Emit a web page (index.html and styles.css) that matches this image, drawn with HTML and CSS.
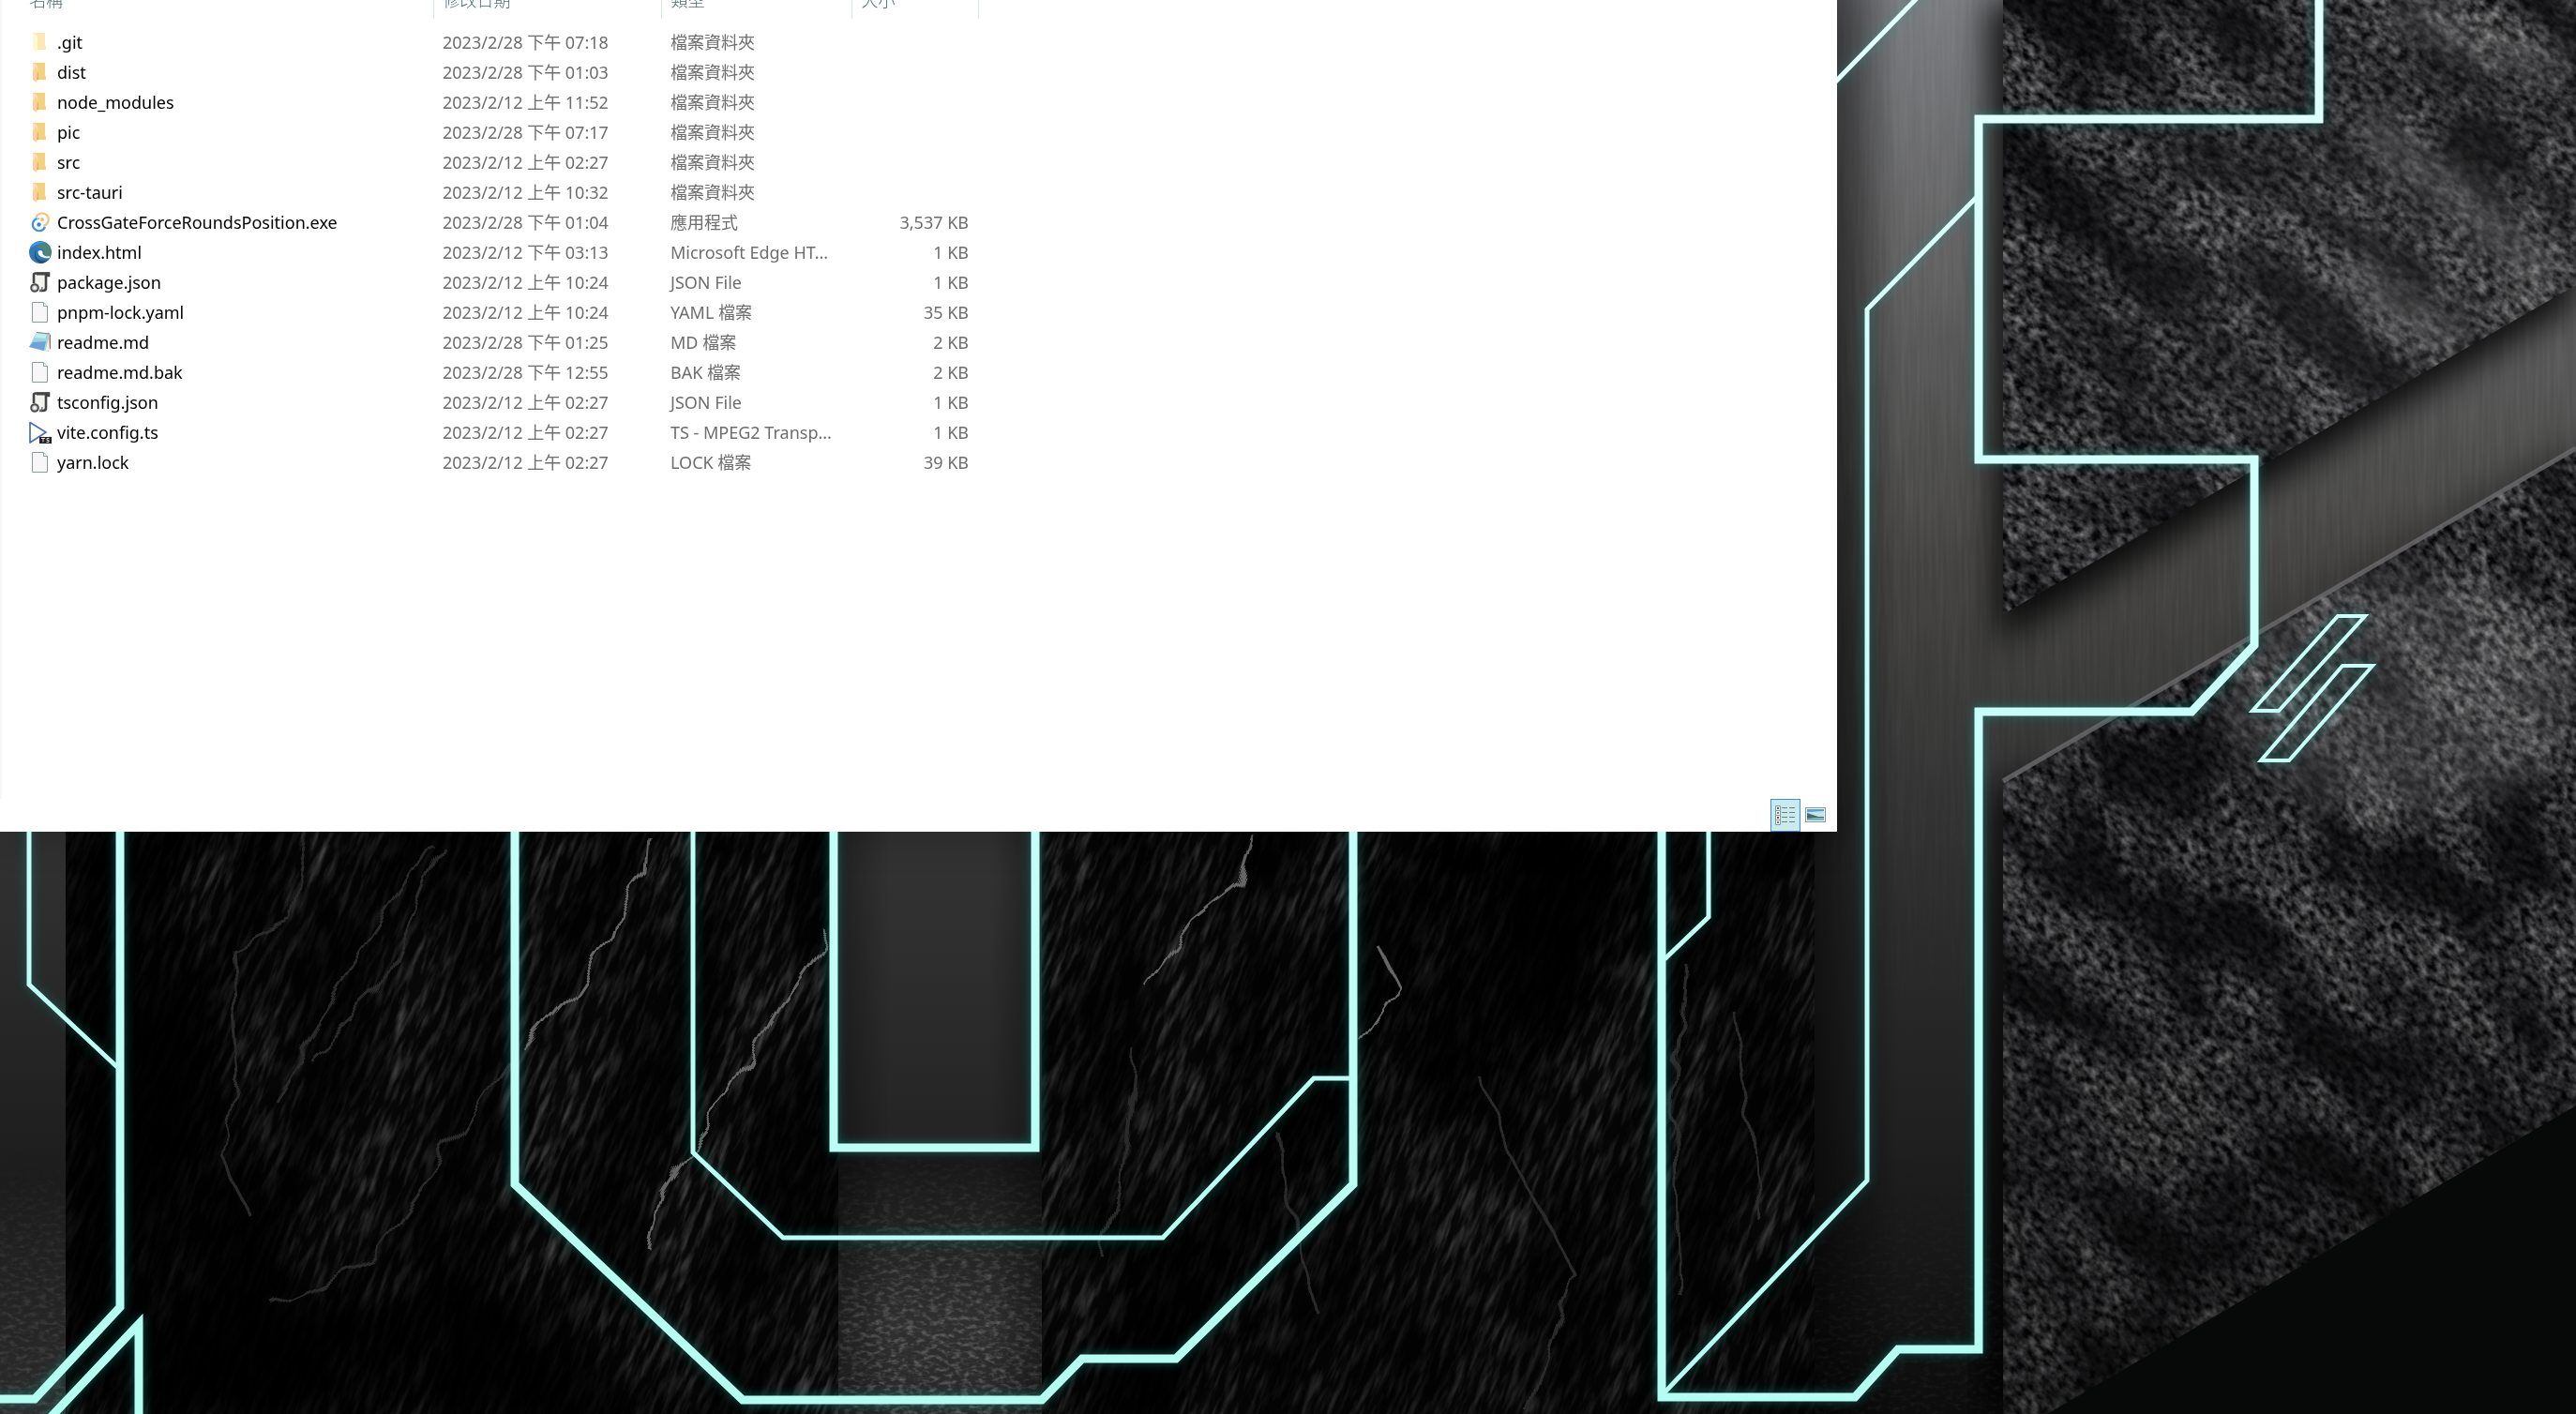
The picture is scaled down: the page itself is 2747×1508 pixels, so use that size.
FILE: index.html
```html
<!DOCTYPE html>
<html lang="zh-Hant">
<head>
<meta charset="utf-8">
<title>檔案總管</title>
<link rel="stylesheet" href="styles.css">
</head>
<body>
<svg class="wallpaper" viewBox="0 0 2747 1508" preserveAspectRatio="xMinYMin slice" aria-hidden="true">
  <defs>
    <linearGradient id="metal" x1="0" y1="0" x2="0" y2="1508" gradientUnits="userSpaceOnUse">
      <stop offset="0" stop-color="#7a7b7f"/><stop offset=".2" stop-color="#5e5e5e"/><stop offset=".4" stop-color="#434241"/><stop offset=".6" stop-color="#303030"/><stop offset=".8" stop-color="#202021"/><stop offset="1" stop-color="#0c0c0c"/>
    </linearGradient>
    <linearGradient id="pillarShade">
      <stop offset="0" stop-color="#000" stop-opacity=".65"/><stop offset=".25" stop-color="#000" stop-opacity=".1"/><stop offset=".75" stop-color="#000" stop-opacity=".1"/><stop offset="1" stop-color="#000" stop-opacity=".7"/>
    </linearGradient>
    <linearGradient id="leftShade">
      <stop offset="0" stop-color="#000" stop-opacity=".6"/><stop offset="1" stop-color="#000" stop-opacity="0"/>
    </linearGradient>
    <linearGradient id="midMetal" x1="0" y1="886" x2="0" y2="1508" gradientUnits="userSpaceOnUse">
      <stop offset="0" stop-color="#383838"/><stop offset=".53" stop-color="#272727"/><stop offset=".56" stop-color="#191919"/><stop offset=".85" stop-color="#333"/><stop offset="1" stop-color="#2a2a2a"/>
    </linearGradient>
    <linearGradient id="leftMetal" x1="0" y1="886" x2="0" y2="1508" gradientUnits="userSpaceOnUse">
      <stop offset="0" stop-color="#333"/><stop offset=".6" stop-color="#1c1c1c"/><stop offset="1" stop-color="#2b2b2b"/>
    </linearGradient>
    <linearGradient id="neon" x1="0" y1="0" x2="0" y2="1508" gradientUnits="userSpaceOnUse">
      <stop offset="0" stop-color="#e2fffc"/><stop offset=".5" stop-color="#c8fff8"/><stop offset="1" stop-color="#b4fdf1"/>
    </linearGradient>
    <linearGradient id="stoneShade" x1="0" y1="800" x2="0" y2="1508" gradientUnits="userSpaceOnUse">
      <stop offset="0" stop-color="#000" stop-opacity="0"/><stop offset="1" stop-color="#000" stop-opacity=".35"/>
    </linearGradient>
    <radialGradient id="stoneLight" cx="2570" cy="300" r="420" gradientUnits="userSpaceOnUse">
      <stop offset="0" stop-color="#fff" stop-opacity=".08"/><stop offset="1" stop-color="#fff" stop-opacity="0"/>
    </radialGradient>
    <filter id="granite" x="0" y="0" width="100%" height="100%" color-interpolation-filters="sRGB">
      <feTurbulence type="fractalNoise" baseFrequency=".09 .14" numOctaves="4" seed="8"/>
      <feColorMatrix values="1.1 0 0 0 -.28  1.1 0 0 0 -.28  1.1 0 0 0 -.28  0 0 0 0 1" result="grain"/>
      <feTurbulence type="fractalNoise" baseFrequency=".007 .014" numOctaves="5" seed="4"/>
      <feColorMatrix values="2.8 0 0 0 -.85  2.8 0 0 0 -.85  2.8 0 0 0 -.84  0 0 0 0 1" result="patches"/>
      <feComposite in="grain" in2="patches" operator="arithmetic" k1=".68" k2=".2" k3="0" k4="0"/>
      <feColorMatrix values=".72 0 0 0 .02  0 .72 0 0 .02  0 0 .72 0 .026  0 0 0 0 1"/>
    </filter>
    <filter id="slate" x="0" y="0" width="100%" height="100%" color-interpolation-filters="sRGB">
      <feTurbulence type="fractalNoise" baseFrequency=".15 .024" numOctaves="4" seed="21"/>
      <feColorMatrix values="1.7 0 0 0 -.74  1.7 0 0 0 -.74  1.7 0 0 0 -.74  0 0 0 0 1" result="grain"/>
      <feTurbulence type="fractalNoise" baseFrequency=".012 .005" numOctaves="3" seed="12"/>
      <feColorMatrix values="2.4 0 0 0 -.85  2.4 0 0 0 -.85  2.4 0 0 0 -.85  0 0 0 0 1" result="patches"/>
      <feComposite in="grain" in2="patches" operator="arithmetic" k1=".34" k2=".1" k3=".03" k4="0"/>
      <feColorMatrix values=".36 0 0 0 .006  0 .36 0 0 .006  0 0 .36 0 .006  0 0 0 0 1"/>
    </filter>
    <filter id="brushed" x="0" y="0" width="100%" height="100%" color-interpolation-filters="sRGB">
      <feTurbulence type="fractalNoise" baseFrequency=".25 .012" numOctaves="2" seed="3"/>
      <feColorMatrix values="0 0 0 0 1  0 0 0 0 1  0 0 0 0 1  .1 0 0 0 -.03"/>
    </filter>
    <filter id="rough" x="0" y="0" width="100%" height="100%" color-interpolation-filters="sRGB">
      <feTurbulence type="fractalNoise" baseFrequency=".12 .22" numOctaves="3" seed="5"/>
      <feColorMatrix values="0 0 0 0 .8  0 0 0 0 .8  0 0 0 0 .8  1.1 0 0 0 -.48"/>
    </filter>
    <filter id="glow" x="0" y="0" width="2747" height="1508" filterUnits="userSpaceOnUse"><feGaussianBlur stdDeviation="6"/></filter>
    <filter id="shadow" x="-20%" y="-20%" width="140%" height="140%"><feGaussianBlur stdDeviation="18"/></filter>
    <filter id="crackle" x="0" y="860" width="2000" height="648" filterUnits="userSpaceOnUse">
      <feTurbulence type="fractalNoise" baseFrequency=".025" numOctaves="2" seed="2"/>
      <feDisplacementMap in="SourceGraphic" scale="24"/>
      <feGaussianBlur stdDeviation=".7"/>
    </filter>
    <linearGradient id="fadeDown" x1="0" y1="1220" x2="0" y2="1420" gradientUnits="userSpaceOnUse">
      <stop offset="0" stop-color="#000"/><stop offset="1" stop-color="#fff"/>
    </linearGradient>
    <linearGradient id="fadeUp" x1="0" y1="500" x2="0" y2="1150" gradientUnits="userSpaceOnUse">
      <stop offset="0" stop-color="#fff"/><stop offset="1" stop-color="#000"/>
    </linearGradient>
    <mask id="roughMask" maskUnits="userSpaceOnUse" x="0" y="0" width="2747" height="1508"><rect width="2747" height="1508" fill="url(#fadeDown)"/></mask>
    <mask id="brushedMask" maskUnits="userSpaceOnUse" x="0" y="0" width="2747" height="1508"><rect width="2747" height="1508" fill="url(#fadeUp)"/></mask>
    <clipPath id="upperStone"><path d="M2136 0H2747V304L2136 655Z"/></clipPath>
    <clipPath id="lowerStone"><path d="M2136 833L2747 478V1179L2183 1508H2136Z"/></clipPath>
    <clipPath id="slatePanels"><path d="M70 886H894V1508H70ZM1111 886H1935V1508H1111Z"/></clipPath>
    <g id="outlines" fill="none">
      <path stroke-width="9" d="M2473 -10V127H2110V490H2404V688L2337 759H2110V1439H2024L1978 1490H1772V800M128 800V1394L37 1492H-10M46 1520L148 1412V1530M549 800V1263L792 1493H1111L1154 1449H1254L1443 1263V800M889 800V1224H1104V800"/>
      <path stroke-width="5" d="M1940 105L2050 -8M2110 208L1991 330V1259L1775 1485M1822 800V978L1775 1023M31 800V1050L125 1138M739 800V1229L835 1320H1240L1401 1150H1443"/>
      <path stroke-width="4" d="M2493 657H2522L2430 758H2402ZM2498 710H2530L2441 811H2411Z"/>
    </g>
  </defs>

  <rect width="2747" height="1508" fill="#050505"/>
  <rect x="1935" width="812" height="1508" fill="url(#metal)"/>
  <g mask="url(#brushedMask)"><rect x="1935" width="812" height="1200" filter="url(#brushed)"/></g>
  <rect x="1935" width="90" height="1508" fill="url(#leftShade)"/>
  <path d="M2747 1179L2183 1508H2747Z" fill="#070808"/>
  <path d="M2120 0H2747V325L2130 685Z" fill="#000" opacity=".85" filter="url(#shadow)"/>
  <path d="M2125 850L2170 810V1508H2110Z" fill="#000" opacity=".8" filter="url(#shadow)"/>
  <path d="M2300 735L2747 475V500Z" fill="#000" opacity=".6" filter="url(#shadow)"/>

  <g clip-path="url(#upperStone)">
    <rect x="1900" y="-500" width="1300" height="1500" transform="rotate(40 2440 330)" filter="url(#granite)"/>
    <rect x="2136" width="611" height="655" fill="url(#stoneLight)"/>
    <path d="M2560 5L2640 45L2730 70M2520 130L2610 200L2680 260L2720 300M2500 290L2560 330L2620 370" fill="none" stroke="#aaa" stroke-width="22" opacity=".45" filter="url(#shadow)"/>
  </g>
  <g clip-path="url(#lowerStone)">
    <rect x="1800" y="300" width="1500" height="1500" transform="rotate(50 2440 1000)" filter="url(#granite)"/>
    <ellipse cx="2560" cy="740" rx="190" ry="130" fill="#fff" opacity=".13" filter="url(#shadow)"/>
    <rect x="2136" y="478" width="611" height="1030" fill="url(#stoneShade)"/>
  </g>
  <path d="M2136 833L2747 478" stroke="#6c6a6c" stroke-width="5" opacity=".8"/>

  <g clip-path="url(#slatePanels)">
    <rect x="-400" y="400" width="2700" height="1600" transform="rotate(22 1000 1200)" filter="url(#slate)"/>
    <path d="M70 886H180L330 1508H70ZM1590 886H1730L1690 1070L1590 1110L1510 1190L1480 1100ZM1350 1130L1400 1150L1260 1508H1180ZM70 1380H560L700 1508H70Z" fill="#000" opacity=".75" filter="url(#shadow)"/>
    <g class="cracks" filter="url(#crackle)">
      <path d="M330 886L310 980L245 1010L255 1150L235 1230L270 1300M460 900L370 1040L290 1170M540 1130L470 1240L400 1340L290 1390M470 900L405 1060L330 1130M1210 1120L1195 1270L1175 1340M1365 1210L1375 1290L1405 1400M1580 1150L1620 1250L1680 1360L1630 1508M1800 1030L1785 1180L1790 1380M1850 1080L1870 1220L1875 1300"/>
      <path class="bright" d="M690 890L687 930L660 965L650 1000L610 1060L560 1120M883 995L830 1075L780 1165L740 1215L705 1270L690 1330M1335 890L1320 940L1270 980L1220 1050M1470 1010L1490 1050L1450 1110"/>
    </g>
  </g>

  <rect x="894" y="880" width="217" height="628" fill="url(#midMetal)"/>
  <g mask="url(#roughMask)">
    <rect x="894" y="1225" width="217" height="283" filter="url(#rough)" opacity=".8"/>
    <rect x="1935" y="1225" width="200" height="283" filter="url(#rough)" opacity=".12"/>
  </g>
  <rect x="894" y="880" width="217" height="628" fill="url(#pillarShade)" opacity=".6"/>
  <rect y="880" width="70" height="628" fill="url(#leftMetal)"/>
  <g mask="url(#roughMask)"><rect y="1225" width="70" height="283" filter="url(#rough)" opacity=".35"/></g>
  <path d="M0 880H1959V0H1970V892H0Z" fill="#000" opacity=".5" filter="url(#shadow)"/>

  <use href="#outlines" stroke="#19a597" filter="url(#glow)" opacity=".5"/>
  <use href="#outlines" stroke="url(#neon)"/>
</svg>

<svg class="sprite" aria-hidden="true">
  <symbol id="folder" viewBox="0 0 24 24">
    <path fill="#f6d17d" d="M4 2H17V15L18 17V20H9L7 23Z"/><path fill="#fce6b2" d="M4 2L9 5V14L4 12Z"/><path fill="#fbd09a" d="M4 11L7 5L9 9V20L7.500 22.500L4 20Z"/><path fill="#eab06a" d="M9 11L10 13V20H8Z"/>
  </symbol>
  <symbol id="folder-hidden" viewBox="0 0 24 24">
    <path fill="#fde7b6" d="M4 2H17V15L18 17V20H9L7 23Z"/><path fill="#fffbd0" d="M4 2L9 5V20L7.500 22.500L4 20Z"/>
  </symbol>
  <symbol id="tauri" viewBox="0 0 24 24" fill="none">
    <path stroke="#f3c37a" stroke-width="2.200" d="M7.500 7A6.800 6.800 0 1 1 15.500 15.800"/><path stroke="#3f92de" stroke-width="2.200" d="M8.500 8A6.800 6.800 0 1 0 17 17"/><path stroke="#78bdf0" stroke-width="1.500" d="M8 8.500L11 8"/><circle cx="14" cy="9" r="2" fill="#f3bd68"/><circle cx="10.500" cy="14.500" r="2.200" fill="#3187d8"/>
  </symbol>
  <symbol id="edge" viewBox="0 0 24 24">
    <circle cx="12" cy="12" r="12" fill="#2d78b8"/><path fill="#3f97e3" d="M1 8A12 12 0 0 1 18 2C12 2 5 5 1 8Z"/><path fill="#4f8579" d="M12 3C17 0 24 5 24 13C23 16 19 17 15 15C18 12 15 6 8 7Z"/><path fill="#20506a" d="M8 9C5 16 9 21 15 21C18 21 21 20 22 18C19 22 15 24 12 24C6 21 4 14 8 9Z"/><path fill="#fff" d="M9.500 12C9.500 9.500 14 9 14.500 12C14 14 15 15.500 19 16.500L22 16V18C16 19 10 17 9.500 12Z"/>
  </symbol>
  <symbol id="json" viewBox="0 0 24 24">
    <path fill="#f2f2ef" stroke="#444" stroke-width="2.600" d="M5 13V4Q5 2.500 7 2.500H21V5H18V18Q18 21 15 21H11"/><path stroke="#444" stroke-width="3" d="M8 3H22"/><path fill="none" stroke="#777" stroke-width="1.500" d="M14 17Q14 21 11 21"/><circle cx="6" cy="18" r="3.800" fill="#c9d0d0" stroke="#4b4b4b" stroke-width="2"/><circle cx="6" cy="18" r="1.600" fill="#fff"/>
  </symbol>
  <symbol id="page" viewBox="0 0 24 24">
    <path fill="#f7f7f7" stroke="#8b9b9b" d="M3.500 1.500H15.500L19.500 5.500V22.500H3.500Z"/><path fill="#fff" stroke="#7fa9a4" d="M15.500 1.500V5.500H19.500"/>
  </symbol>
  <symbol id="notepad" viewBox="0 0 24 24">
    <path fill="#a86c5b" d="M20 2L23 4V19L19 21Z"/><path fill="#b9cdc7" d="M8 2L22 3L21 22L16 21L19 8Z"/><path fill="#e9f4f0" d="M21 8L22 20L17 22Z"/><path fill="#9dd6df" d="M8 1L21 3L16 21L0 17Z"/><path fill="#6ba4db" d="M4 12L18 11L16 21L0 17Z"/><path fill="#c5ecec" d="M8 2L19 4L17 8L6 7Z"/><path stroke="#6d8f8c" d="M8 1.500L22 3"/>
  </symbol>
  <symbol id="ts" viewBox="0 0 24 24">
    <path fill="#fff" stroke="#4b6fb0" stroke-width="1.700" stroke-linejoin="round" d="M1 1.500L18 12L1 23Z"/><rect x="11" y="17" width="13" height="7" fill="#222"/><path stroke="#ddd" fill="none" d="M13 18.500H17M15 18.500V22.500M21.500 18.500H19V20.500H21V22.500H18.500"/>
  </symbol>
</svg>

<main class="window">
  <div class="pane">
    <table class="files">
      <colgroup><col class="col-name"><col class="col-date"><col class="col-type"><col class="col-size"></colgroup>
      <thead><tr><th scope="col">名稱</th><th scope="col">修改日期</th><th scope="col">類型</th><th scope="col">大小</th></tr></thead>
      <tbody>
        <tr><td><span class="name"><svg class="icon"><use href="#folder-hidden"/></svg>.git</span></td><td>2023/2/28 下午 07:18</td><td>檔案資料夾</td><td></td></tr>
        <tr><td><span class="name"><svg class="icon"><use href="#folder"/></svg>dist</span></td><td>2023/2/28 下午 01:03</td><td>檔案資料夾</td><td></td></tr>
        <tr><td><span class="name"><svg class="icon"><use href="#folder"/></svg>node_modules</span></td><td>2023/2/12 上午 11:52</td><td>檔案資料夾</td><td></td></tr>
        <tr><td><span class="name"><svg class="icon"><use href="#folder"/></svg>pic</span></td><td>2023/2/28 下午 07:17</td><td>檔案資料夾</td><td></td></tr>
        <tr><td><span class="name"><svg class="icon"><use href="#folder"/></svg>src</span></td><td>2023/2/12 上午 02:27</td><td>檔案資料夾</td><td></td></tr>
        <tr><td><span class="name"><svg class="icon"><use href="#folder"/></svg>src-tauri</span></td><td>2023/2/12 上午 10:32</td><td>檔案資料夾</td><td></td></tr>
        <tr><td><span class="name"><svg class="icon"><use href="#tauri"/></svg>CrossGateForceRoundsPosition.exe</span></td><td>2023/2/28 下午 01:04</td><td>應用程式</td><td>3,537 KB</td></tr>
        <tr><td><span class="name"><svg class="icon"><use href="#edge"/></svg>index.html</span></td><td>2023/2/12 下午 03:13</td><td>Microsoft Edge HT...</td><td>1 KB</td></tr>
        <tr><td><span class="name"><svg class="icon"><use href="#json"/></svg>package.json</span></td><td>2023/2/12 上午 10:24</td><td>JSON File</td><td>1 KB</td></tr>
        <tr><td><span class="name"><svg class="icon"><use href="#page"/></svg>pnpm-lock.yaml</span></td><td>2023/2/12 上午 10:24</td><td>YAML 檔案</td><td>35 KB</td></tr>
        <tr><td><span class="name"><svg class="icon"><use href="#notepad"/></svg>readme.md</span></td><td>2023/2/28 下午 01:25</td><td>MD 檔案</td><td>2 KB</td></tr>
        <tr><td><span class="name"><svg class="icon"><use href="#page"/></svg>readme.md.bak</span></td><td>2023/2/28 下午 12:55</td><td>BAK 檔案</td><td>2 KB</td></tr>
        <tr><td><span class="name"><svg class="icon"><use href="#json"/></svg>tsconfig.json</span></td><td>2023/2/12 上午 02:27</td><td>JSON File</td><td>1 KB</td></tr>
        <tr><td><span class="name"><svg class="icon"><use href="#ts"/></svg>vite.config.ts</span></td><td>2023/2/12 上午 02:27</td><td>TS - MPEG2 Transp...</td><td>1 KB</td></tr>
        <tr><td><span class="name"><svg class="icon"><use href="#page"/></svg>yarn.lock</span></td><td>2023/2/12 上午 02:27</td><td>LOCK 檔案</td><td>39 KB</td></tr>
      </tbody>
    </table>
  </div>
  <footer class="status">
    <button class="view view-active" type="button" aria-label="詳細資料" aria-pressed="true">
      <svg width="22" height="22" viewBox="0 0 22 22" fill="none">
        <path fill="#fff" stroke="#7d9f9b" d="M.5 1.500H5.500V21.500H.5ZM.5 6.500H5.500M.5 11.500H5.500M.5 16.500H5.500"/>
        <path stroke="#747b7e" d="M7 3.500H13M15 3.500H21M7 8.500H13M15 8.500H21M7 13.500H13M15 13.500H21M7 18.500H13M15 18.500H21"/>
        <path fill="#3d7ac0" d="M2 3H4V5H2Z"/><path fill="#887a86" d="M2 8H4V10H2ZM2 18H4V20H2Z"/><path fill="#a4422f" d="M2 13H4V15H2Z"/>
      </svg>
    </button>
    <button class="view" type="button" aria-label="大圖示" aria-pressed="false">
      <svg width="22" height="16" viewBox="0 0 22 16">
        <rect x=".5" y=".5" width="21" height="15" fill="#fff" stroke="#7d9f9b"/><rect x="2" y="2" width="18" height="12" fill="#bfe6ef"/><path fill="#5a9fdc" d="M2 2H20V4L2 5Z"/><path fill="#3f6a70" d="M2 6L8 8L14 10H20V11L2 12Z"/><path fill="#7fb4bd" d="M2 12L20 11V14H2Z"/>
      </svg>
    </button>
  </footer>
</main>
</body>
</html>
```
FILE: styles.css
```css
* {
  box-sizing: border-box;
}

body {
  margin: 0;
  height: 100vh;
  overflow: hidden;
  background: #050505;
  font-family: "Noto Sans", "Noto Sans CJK TC", sans-serif;
  font-size: 18px;
  line-height: 24px;
}

/* Desktop picture behind every window */
.wallpaper {
  position: absolute;
  inset: 0;
  width: 100%;
  height: 100%;
  z-index: -1;
}

.cracks {
  fill: none;
  stroke: #2c2c2c;
  stroke-width: 3;
}

.cracks .bright {
  stroke: #666;
}

.sprite {
  display: none;
}

/* Explorer window; its top runs off the screen */
.window {
  display: flex;
  flex-direction: column;
  width: 71.3vw;
  height: 58.8vh;
  background: #fff;
  overflow: hidden;
}

.pane {
  flex: 1;
  min-height: 0;
  border-left: 2px solid #f7f7f7;
}

.files {
  margin-top: -20px;
  border-collapse: collapse;
  table-layout: fixed;
  width: 1041px;
}

.col-name {
  width: 460px;
}

.col-date {
  width: 243px;
}

.col-type {
  width: 203px;
}

.col-size {
  width: 135px;
}

.files th {
  height: 40px;
  padding: 0 10px;
  border-right: 1px solid #d5ebe6;
  color: #4f6b72;
  font-weight: 300;
  text-align: left;
}

.files th:first-child {
  padding-left: 29px;
}

.files tbody::before {
  content: "";
  display: block;
  height: 9px;
}

.files td {
  height: 32px;
  padding: 0 10px;
  color: #6d6d6d;
  white-space: nowrap;
}

.files td:first-child {
  padding-left: 29px;
  color: #000;
}

.files td:last-child {
  text-align: right;
}

.name {
  display: flex;
  align-items: center;
  gap: 6px;
}

.icon {
  width: 24px;
  height: 24px;
}

.status {
  display: flex;
  justify-content: flex-end;
  padding-right: 7px;
}

.view {
  display: flex;
  align-items: center;
  justify-content: center;
  width: 32px;
  height: 35px;
  padding: 0;
  border: 1px solid transparent;
  background: none;
}

.view-active {
  border-color: #3b8ede;
  background: #c9ebee;
}
```
